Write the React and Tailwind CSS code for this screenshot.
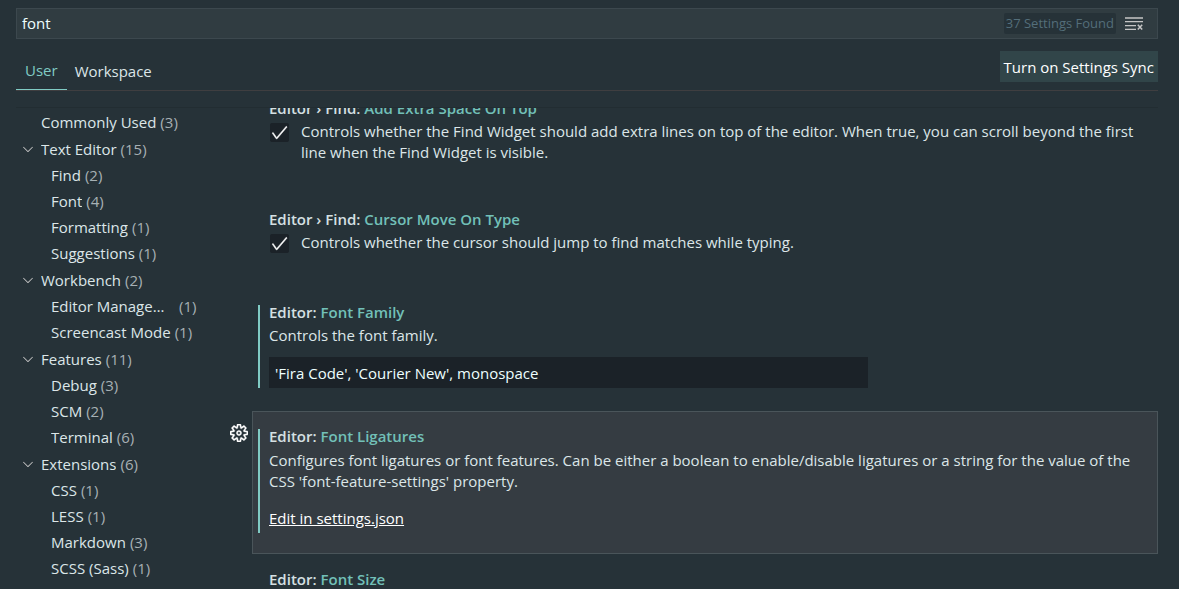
import React, { useState } from 'react';
import { VscCheck, VscChevronDown, VscSettingsGear } from 'react-icons/vsc';

const tree = [
  { label: 'Commonly Used', count: 3 },
  {
    label: 'Text Editor',
    count: 15,
    children: [
      { label: 'Find', count: 2 },
      { label: 'Font', count: 4 },
      { label: 'Formatting', count: 1 },
      { label: 'Suggestions', count: 1 },
    ],
  },
  {
    label: 'Workbench',
    count: 2,
    children: [
      { label: 'Editor Management', count: 1 },
      { label: 'Screencast Mode', count: 1 },
    ],
  },
  {
    label: 'Features',
    count: 11,
    children: [
      { label: 'Debug', count: 3 },
      { label: 'SCM', count: 2 },
      { label: 'Terminal', count: 6 },
    ],
  },
  {
    label: 'Extensions',
    count: 6,
    children: [
      { label: 'CSS', count: 1 },
      { label: 'LESS', count: 1 },
      { label: 'Markdown', count: 3 },
      { label: 'SCSS (Sass)', count: 1 },
    ],
  },
];

function ClearIcon() {
  return (
    <svg viewBox="0 0 18 14" className="h-[14px] w-[18px]" fill="none" stroke="currentColor">
      <path d="M0 1h18M0 4.7h18M0 8.6h11M0 12.4h11" strokeWidth="1.3" />
      <path d="M12.8 7.8l4.4 4.8M17.2 7.8l-4.4 4.8" strokeWidth="1.5" />
    </svg>
  );
}

function SearchBar() {
  const [query, setQuery] = useState('font');

  return (
    <div className="flex h-[31px] items-center border border-[#3c484e] bg-[#303c41] pr-[14px]">
      <input
        type="text"
        aria-label="Search settings"
        value={query}
        onChange={(e) => setQuery(e.target.value)}
        className="h-full min-w-0 flex-1 bg-transparent px-[5px] pb-[2px] text-[#eeffff] outline-none"
      />
      <span className="rounded-xs bg-[#263238] px-[2px] text-[13px] leading-[21px] text-[#546e7a]">
        37 Settings Found
      </span>
      <button type="button" aria-label="Clear search" className="ml-[9px] text-[#c5c5c5]">
        <ClearIcon />
      </button>
    </div>
  );
}

function Tabs() {
  return (
    <div className="mt-3 flex items-start justify-between border-b border-[#3f3e40]">
      <div className="flex h-[39px]">
        <button type="button" className="border-b border-[#80cbc4] px-[9px] text-[#80cbc4]">
          User
        </button>
        <button type="button" className="px-2 pt-px text-[#dce6e8]">
          Workspace
        </button>
      </div>
      <button type="button" className="h-[31px] bg-[#314549] px-1 pt-px text-white">
        Turn on Settings Sync
      </button>
    </div>
  );
}

function TreeRow({ label, count, expandable, nested }) {
  return (
    <a href="#" className={`flex h-[26px] items-center ${nested ? 'pl-[35px]' : 'pl-1'}`}>
      {!nested && (
        <span className="mr-[5px] w-4 text-[#c5c5c5]">
          {expandable && <VscChevronDown className="h-4 w-4" />}
        </span>
      )}
      <span className="max-w-[124px] truncate">{label}</span>
      <span className="ml-1 text-[#a6b0b4]">({count})</span>
    </a>
  );
}

function Sidebar() {
  return (
    <nav aria-label="Settings sections" className="flex w-[212px] shrink-0 flex-col gap-px pt-px">
      {tree.map((group) => (
        <div key={group.label}>
          <TreeRow label={group.label} count={group.count} expandable={!!group.children} />
          {group.children?.map((item) => (
            <TreeRow key={item.label} label={item.label} count={item.count} nested />
          ))}
        </div>
      ))}
    </nav>
  );
}

function Setting({ category, name, modified, focused, spacing, children }) {
  return (
    <section className="flex">
      <div className="w-6 shrink-0 pt-[13px]">
        {focused && (
          <button type="button" aria-label="More actions" className="ml-[2px] block text-white">
            <VscSettingsGear strokeWidth="0.5" className="h-[18px] w-[18px]" />
          </button>
        )}
      </div>
      <div
        className={`flex min-w-0 flex-1 border pt-[14px] pr-2 pl-[5px] ${spacing} ${
          focused ? 'border-[#4a555a] bg-[#353c42]' : 'border-transparent'
        }`}
      >
        <div className={`mt-[3px] w-[2px] shrink-0 ${modified ? 'bg-[#80cbc4]' : ''}`} />
        <div className="min-w-0 flex-1 pl-[9px]">
          <h3 className="font-semibold text-[#d5e0e3]">
            {category}: <span className="text-[#72c0b8]">{name}</span>
          </h3>
          {children}
        </div>
      </div>
    </section>
  );
}

function CheckSetting({ id, children }) {
  return (
    <div className="mt-[2px] flex items-start gap-3">
      <span className="relative mt-[2px] ml-[1px] h-[19px] w-[19px] shrink-0">
        <input
          id={id}
          type="checkbox"
          defaultChecked
          className="peer block h-full w-full appearance-none rounded-xs bg-[#1b2228]"
        />
        <VscCheck
          strokeWidth="0.4"
          className="pointer-events-none absolute inset-0 hidden h-[19px] w-[19px] text-white peer-checked:block"
        />
      </span>
      <label htmlFor={id}>{children}</label>
    </div>
  );
}

export default function App() {
  return (
    <div className="flex h-screen flex-col overflow-hidden bg-[#263238] pt-2 pr-[21px] pl-4 font-['Open_Sans','Noto_Sans',sans-serif] text-[15px] leading-[21px] text-[#dce6e8]">
      <SearchBar />
      <Tabs />

      <div className="mt-4 flex min-h-0 flex-1 overflow-hidden border-t border-[#222d32]">
        <Sidebar />

        {/* Results list, scrolled a little past its first title */}
        <main className="-mt-[25px] min-w-0 flex-1">
          <Setting category="Editor › Find" name="Add Extra Space On Top" spacing="pb-[30px]">
            <CheckSetting id="find-extra-space">
              Controls whether the Find Widget should add extra lines on top of the editor. When true, you can
              scroll beyond the first line when the Find Widget is visible.
            </CheckSetting>
          </Setting>

          <Setting category="Editor › Find" name="Cursor Move On Type" spacing="pb-[33px]">
            <CheckSetting id="find-cursor-move">
              Controls whether the cursor should jump to find matches while typing.
            </CheckSetting>
          </Setting>

          <Setting category="Editor" name="Font Family" modified spacing="pb-[22px]">
            <label htmlFor="font-family" className="mt-[2px] block">
              Controls the font family.
            </label>
            <input
              id="font-family"
              type="text"
              defaultValue="'Fira Code', 'Courier New', monospace"
              className="mt-[11px] block h-[31px] w-full max-w-[599px] bg-[#1b2228] px-[6px] text-[#eeffff] outline-none"
            />
          </Setting>

          <Setting category="Editor" name="Font Ligatures" modified focused spacing="pb-5">
            <p className="mt-[3px]">
              Configures font ligatures or font features. Can be either a boolean to enable/disable ligatures or
              a string for the value of the CSS 'font-feature-settings' property.
            </p>
            <a href="#" className="mt-4 mb-1 inline-block text-white underline">
              Edit in settings.json
            </a>
          </Setting>

          <Setting category="Editor" name="Font Size" spacing="pb-[22px]">
            <label htmlFor="font-size" className="mt-[2px] block">
              Controls the font size in pixels.
            </label>
            <input
              id="font-size"
              type="text"
              defaultValue="14"
              className="mt-[11px] block h-[31px] w-full max-w-[240px] bg-[#1b2228] px-[6px] text-[#eeffff] outline-none"
            />
          </Setting>
        </main>
      </div>
    </div>
  );
}
